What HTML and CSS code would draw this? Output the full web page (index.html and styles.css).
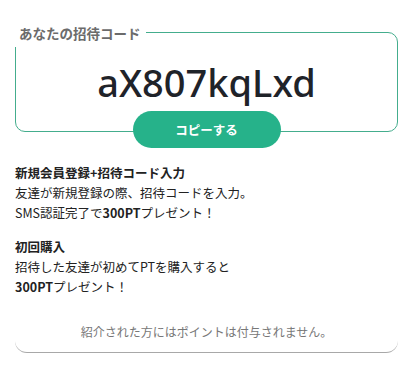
FILE: index.html
```html
<!DOCTYPE html>
<html lang="ja">
<head>
    <meta charset="UTF-8">
    <meta name="viewport" content="width=device-width, initial-scale=1.0">
    <title>招待コード</title>
    <link rel="stylesheet" href="styles.css">
</head>
<body>
    <div class="card">
        <!-- 招待コード -->
        <div class="code-box">
            <span class="code-label">あなたの招待コード</span>
            <p class="code">aX807kqLxd</p>
            <button class="copy-btn">コピーする</button>
        </div>

        <!-- 特典の説明 -->
        <div class="rule">
            <h3>新規会員登録+招待コード入力</h3>
            <p>友達が新規登録の際、招待コードを入力。</p>
            <p>SMS認証完了で<b>300PT</b>プレゼント！</p>
        </div>
        <div class="rule">
            <h3>初回購入</h3>
            <p>招待した友達が初めてPTを購入すると</p>
            <p><b>300PT</b>プレゼント！</p>
        </div>

        <p class="note">紹介された方にはポイントは付与されません。</p>
    </div>
</body>
</html>
```

FILE: styles.css
```css
* {
    margin: 0;
    padding: 0;
    box-sizing: border-box;
}

body {
    background-color: #fff;
    font-family: "Noto Sans CJK JP", "Noto Sans", sans-serif;
    color: #222;
}

/* カード全体 */
.card {
    width: 383px;
    margin-left: 15px;
    padding: 32px 0 10px;
    border-bottom: 1px solid #a8a8a8;
    border-radius: 0 0 12px 12px;
}

/* 招待コードの枠 */
.code-box {
    position: relative;
    border: 1px solid #44ad8d;
    border-radius: 10px;
    padding: 24px 0;
    text-align: center;
}

.code-label {
    position: absolute;
    top: -14px;
    left: -2px;
    padding: 0 5px;
    background-color: #fff;
    font-size: 13.5px;
    font-weight: bold;
    line-height: 28px;
    color: #6b6b6b;
}

.code {
    font-family: "Noto Sans", sans-serif;
    font-size: 38px;
    font-weight: 500;
    line-height: 50px;
    color: #1f2329;
}

.copy-btn {
    position: absolute;
    bottom: -17px;
    left: 50%;
    transform: translateX(-50%);
    width: 148px;
    height: 37px;
    border: none;
    border-radius: 19px;
    background-color: #26b28a;
    color: #fff;
    font-family: "Noto Sans CJK JP", sans-serif;
    font-size: 12.5px;
    font-weight: bold;
}

/* 説明文 */
.rule {
    margin-top: 31px;
    font-size: 12.5px;
    line-height: 20px;
}

.rule + .rule {
    margin-top: 14px;
}

.rule h3 {
    font-size: 12.5px;
    font-weight: bold;
}

.rule p b {
    font-weight: bold;
}

.note {
    margin-top: 25px;
    text-align: center;
    font-size: 12px;
    line-height: 20px;
    color: #777;
}
```
